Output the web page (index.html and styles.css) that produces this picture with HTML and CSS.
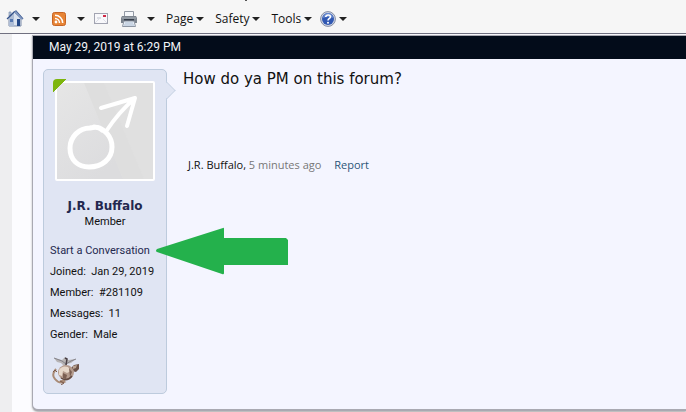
FILE: index.html
```html
<!DOCTYPE html>
<html lang="en">
<head>
<meta charset="utf-8">
<title>Forum thread</title>
<link rel="stylesheet" href="styles.css">
</head>
<body>
<nav class="toolbar" aria-label="Command bar">
  <span class="mark"></span>
  <button class="tool home" aria-label="Home">
    <svg width="18" height="18" viewBox="0 0 18 18"><path d="M3 8 8.500 2.500 15 8v8H3z" fill="#dbe3ef" stroke="#7d8ba7"/><path d="M8 3v13H3V8z" fill="#aebdd6"/><path d="M3 2h2v4H3z" fill="#b6c5df" stroke="#6d7f9f" stroke-width=".6"/><path d="M1 9 8 2l2-1 7 8" fill="none" stroke="#33528b" stroke-width="1.200"/><path d="m8 2 2-1 7 8-2 .5z" fill="#8198c0"/><path d="M4 9h3v3H4z" fill="#5879b0"/><path d="M11 9h3v7h-3z" fill="#244887"/></svg>
    <i class="caret"></i>
  </button>
  <button class="tool feed" aria-label="Feeds">
    <svg width="14" height="14" viewBox="0 0 14 14"><rect x=".5" y=".5" width="13" height="13" rx="2" fill="#e78435" stroke="#c76424"/><circle cx="4" cy="10" r="1.400" fill="#fff"/><path d="M3 6.500A4.500 4.500 0 0 1 7.500 11M3 3.300A7.700 7.700 0 0 1 10.700 11" fill="none" stroke="#fff" stroke-width="1.500"/></svg>
    <i class="caret"></i>
  </button>
  <button class="tool mail" aria-label="Read mail">
    <svg width="14" height="11" viewBox="0 0 14 11"><rect x=".5" y=".5" width="13" height="10" fill="#f8f8fb" stroke="#a2a4b1"/><path d="m1 10 4-4m8 4L9 6" stroke="#dddfe7"/><path d="M9 2h3v2H9z" fill="#cf2945"/><path d="M3 5h4" stroke="#bfc3ce"/></svg>
  </button>
  <button class="tool print" aria-label="Print">
    <svg width="16" height="16" viewBox="0 0 16 16"><path d="M3.500 6V.5h9V6" fill="#f5f7fa" stroke="#9299a4"/><path d="M1 5h14l1 2v5H0V7z" fill="#7c848e"/><path d="M1 7h14" stroke="#a8b0b8"/><path d="M3 9h10" stroke="#343d49" stroke-width="2"/><path d="m3 10-1.500 5.500h13L13 10z" fill="#e7edf5" stroke="#8c95a2"/><path d="M4 12h8m-9 2h10" stroke="#adbed3"/></svg>
    <i class="caret"></i>
  </button>
  <button class="tool page">Page <i class="caret"></i></button>
  <button class="tool safety">Safety <i class="caret"></i></button>
  <button class="tool tools">Tools <i class="caret"></i></button>
  <button class="tool help" aria-label="Help">
    <svg width="16" height="16" viewBox="0 0 16 16"><circle cx="8" cy="8" r="7.400" fill="#d3d9e4" stroke="#838ca5"/><circle cx="8" cy="8" r="6" fill="#3158b2"/><path d="M3 7a5 5 0 0 1 10 0q-5-2-10 0z" fill="#6889d0"/><path d="M5.700 6q.3-2 2.500-2 2.300 0 2.300 1.800 0 1-1.200 1.700Q8 8.200 8 9.500" fill="none" stroke="#fff" stroke-width="1.600"/><circle cx="8" cy="11.700" r="1" fill="#fff"/></svg>
    <i class="caret"></i>
  </button>
</nav>
<main class="canvas">
  <article class="post">
    <header class="post-date">May 29, 2019 at 6:29 PM</header>
    <div class="post-body">
      <aside class="user">
        <div class="avatar">
          <svg viewBox="0 0 96 96" aria-label="Male"><defs><linearGradient id="sheen" x1="0" y1="0" x2=".6" y2="1"><stop offset="0" stop-color="#e6e6e6"/><stop offset="1" stop-color="#dcdcde"/></linearGradient></defs><path d="M0 0h96v96H0z" fill="#e0e0e0"/><path d="M27 0h20l40 96H66z" fill="#dedede"/><path d="M0 0h27l39 96H0z" fill="url(#sheen)"/><g fill="none" stroke="#fff" stroke-linecap="round" stroke-linejoin="round"><path d="M45 47c-3-4-8-3-12-2-11 0-20 9-20 20 0 12 8 19 19 19 13 0 23-8 23-20 0-10-7-19-18-20" stroke-width="5"/><path d="M50 47q12-18 27-31M44 25l34-10-8 28" stroke-width="4"/></g></svg>
        </div>
        <h2 class="name">J.R. Buffalo</h2>
        <p class="rank">Member</p>
        <ul class="facts">
          <li><a href="#">Start a Conversation</a></li>
          <li>Joined:&nbsp; Jan 29, 2019</li>
          <li>Member:&nbsp; #281109</li>
          <li>Messages:&nbsp; 11</li>
          <li>Gender:&nbsp; Male</li>
        </ul>
        <svg class="emblem" width="28" height="30" viewBox="0 0 28 30" aria-label="Eagle, globe and anchor"><path d="m2 3 8 2 3-3 3 3 8-1-5 4-4 1-2 3-4-4-4-1z" fill="#b7b4b4"/><path d="m2 3 8 3 4 3 5-3 5-2" fill="none" stroke="#85838a"/><path d="m13 3 2 1-1 6" fill="none" stroke="#493f44" stroke-width="1.500"/><path d="m19 13 3-3 5-1v5l-3 3-4-1z" fill="#6b5248"/><path d="m21 11 4-1-1 3-3 1z" fill="#b9a393"/><path d="M4 14q-5 6-1 10 4 5 9 3l-2-1 3-1" fill="none" stroke="#a98b76" stroke-width="2"/><path d="m1 17 2-2 2 2M8 26l4 2-3 2" fill="none" stroke="#7a594a"/><ellipse cx="14" cy="17.500" rx="8" ry="7.500" fill="#b49b8d"/><path d="M7 15q3-5 9-3l3 4-4 2-4-2-1 5-3-1z" fill="#e7d8ca"/><path d="m11 18 4 2-1 4-3-1zM17 13l3 4-2 5z" fill="#7b5f52"/><path d="M9 23q6 4 11-2" fill="none" stroke="#634b43" stroke-width="1.500"/></svg>
      </aside>
      <section class="message">
        <p class="text">How do ya PM on this forum?</p>
        <p class="meta">J.R. Buffalo, <span class="time">5 minutes ago</span> <a href="#">Report</a></p>
      </section>
    </div>
    <svg class="pointer" width="134" height="48" viewBox="0 0 134 48" aria-hidden="true"><path d="M2 22 68 1q1-1 1 1v9h62l2 2v25H69v8q0 2-2 1L2 25q-2-1 0-3z" fill="#24b14c"/></svg>
  </article>
</main>
</body>
</html>
```
FILE: styles.css
```css
* { box-sizing: border-box; }
html { height: 100%; }
body {
  display: flex;
  flex-direction: column;
  min-height: 100%;
  margin: 0;
  background: #eeeef0;
  color: #111;
  font-family: "Open Sans", "Noto Sans", sans-serif;
}
p, h2, ul { margin: 0; padding: 0; }
a { text-decoration: none; }
svg { display: block; flex: none; }

.toolbar {
  position: relative;
  display: flex;
  align-items: center;
  height: 34px;
  padding: 4px 0 0 6px;
  background: #f6f6f6;
  border-bottom: 1px solid #707080;
}
.mark {
  position: absolute;
  top: 0;
  left: 245px;
  width: 2px;
  height: 1px;
  background: #555;
}
.tool {
  display: flex;
  align-items: center;
  gap: 3px;
  padding: 0;
  border: 0;
  background: none;
  color: #111;
  font: 12px/16px "Open Sans", sans-serif;
}
.caret {
  width: 8px;
  border: solid transparent;
  border-width: 4px 4px 0;
  border-top-color: #222;
}
.home { gap: 8px; margin-right: 12px; }
.feed { gap: 11px; margin-right: 9px; }
.mail { margin-right: 13px; }
.print { gap: 10px; margin-right: 11px; }
.page, .safety { margin-right: 11px; }
.tools { margin-right: 8px; }

.canvas {
  flex: 1;
  margin-left: 12px;
  padding: 1px 0 2px 20px;
  background: #fcfcff;
}
.post {
  position: relative;
  height: 100%;
  border: solid #a9a9b2;
  border-width: 1px 0 2px 1px;
  border-bottom-left-radius: 6px;
  background: #f4f5ff;
  box-shadow: 0 1px 2px #aaa;
}
.post-date {
  padding: 0 16px;
  background: #030c1a;
  color: #f2f4f8;
  font: 12px/23px Roboto, sans-serif;
}
.post-body {
  display: flex;
  align-items: flex-start;
  gap: 16px;
  padding: 10px 10px 15px;
}
.user {
  position: relative;
  flex: 0 0 124px;
  padding: 11px 6px 8px;
  border: 1px solid #bdcbdd;
  border-radius: 5px;
  background: #e0e5f3;
}
.user::after {
  content: "";
  position: absolute;
  top: 14px;
  right: -7px;
  width: 12px;
  height: 12px;
  border: solid #c9d4e5;
  border-width: 1px 1px 0 0;
  background: linear-gradient(45deg, transparent 50%, #e0e5f3 50%);
  transform: rotate(45deg);
}
.avatar {
  position: relative;
  width: 100px;
  margin: 0 auto;
  border: 2px solid #fff;
  border-radius: 2px;
}
.avatar::before {
  content: "";
  position: absolute;
  top: -4px;
  left: -4px;
  width: 13px;
  height: 13px;
  border-top-left-radius: 4px;
  background: linear-gradient(135deg, #7db50e 50%, transparent 50%);
}
.name {
  margin-top: 17px;
  color: #23284f;
  font: bold 12px/16px "DejaVu Sans", sans-serif;
  text-align: center;
}
.rank { font: 11px/15px Roboto, sans-serif; text-align: center; }
.facts {
  margin-top: 11px;
  list-style: none;
  font: 11px/21px Roboto, sans-serif;
  white-space: nowrap;
}
.facts a { color: #24284f; }
.emblem { margin: 10px 0 0 2px; }
.message { flex: 1; }
.text { font: 15px/20px "DejaVu Sans", sans-serif; }
.meta {
  margin: 68px 0 0 5px;
  font-size: 11px;
  line-height: 16px;
}
.time { color: #777; }
.meta a { margin-left: 10px; color: #2c5578; }
.pointer { position: absolute; top: 191px; left: 122px; }
```
